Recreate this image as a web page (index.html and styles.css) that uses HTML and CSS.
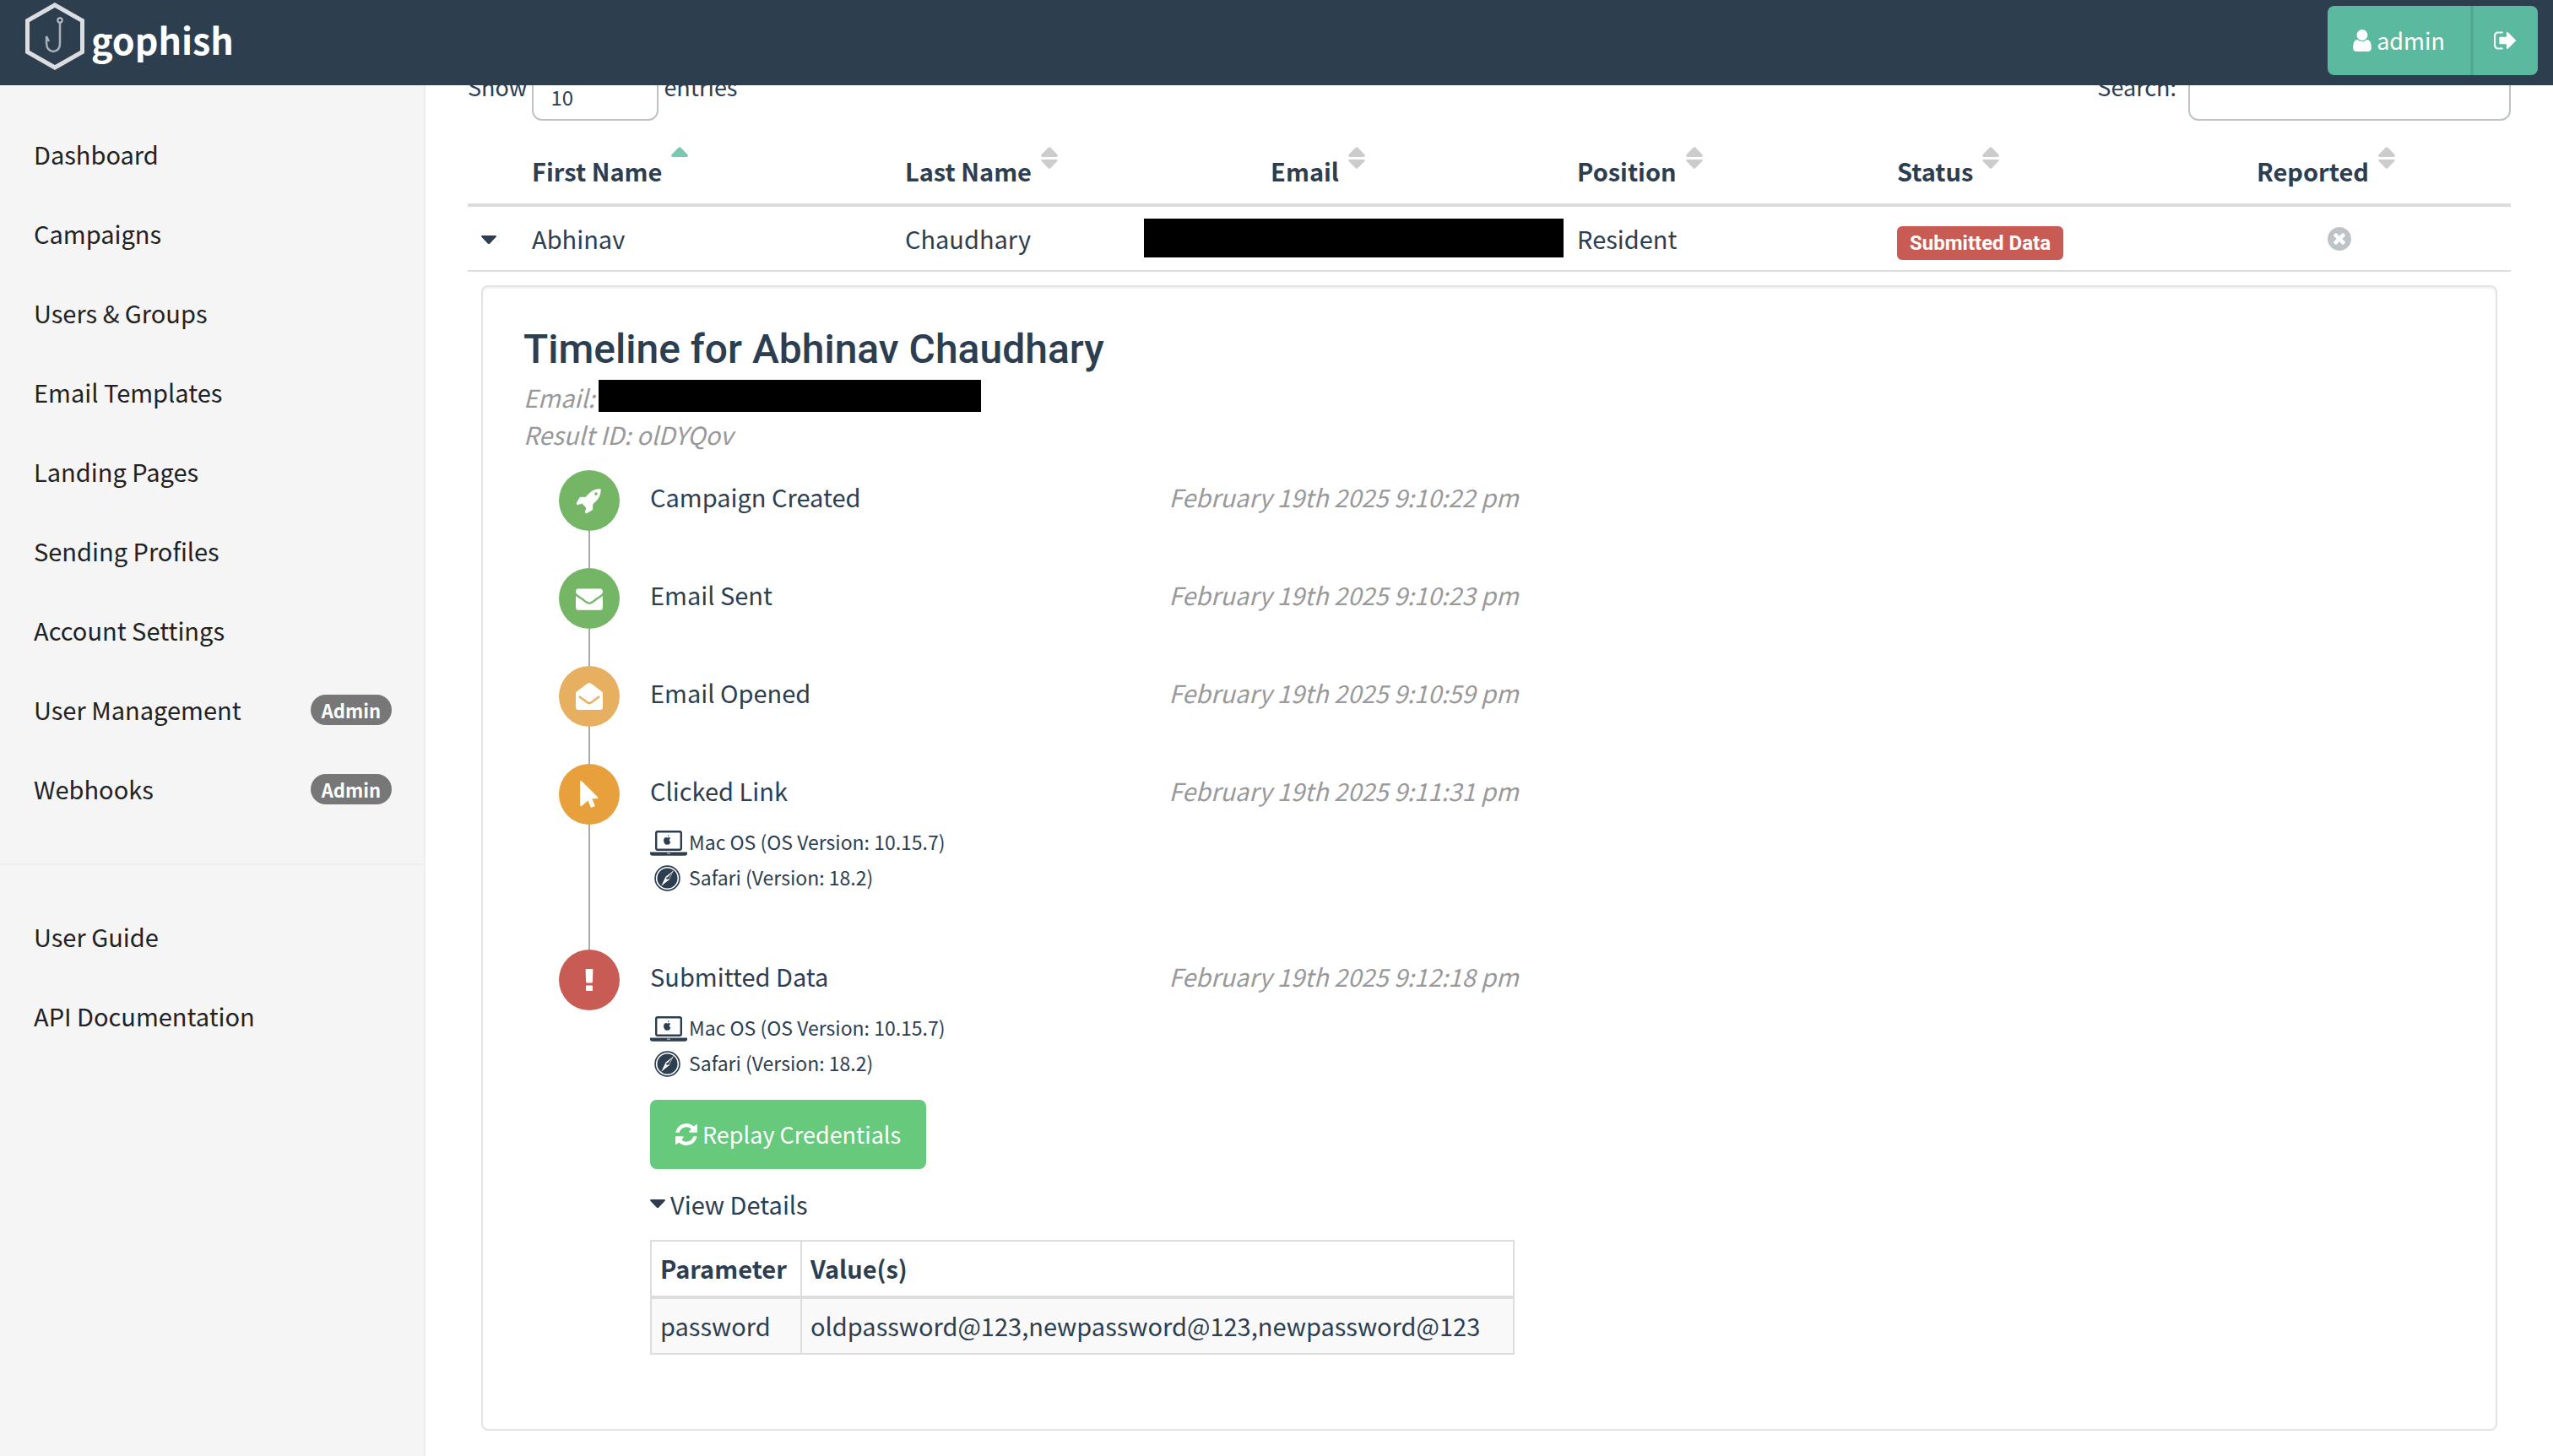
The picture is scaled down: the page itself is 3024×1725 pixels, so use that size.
FILE: index.html
```html
<!DOCTYPE html>
<html lang="en">
<head>
<meta charset="utf-8">
<meta name="viewport" content="width=device-width, initial-scale=1">
<title>Results - Gophish</title>
<link rel="stylesheet" href="styles.css">
</head>
<body>
<svg class="sprite" aria-hidden="true">
  <symbol id="i-user" viewBox="256 128 1280 1536"><path d="M1536 1399q0 109-62.500 187t-150.500 78h-854q-88 0-150.500-78t-62.500-187q0-85 8.500-160.500t31.500-152 58.500-131 94-89 134.500-34.500q131 128 313 128t313-128q76 0 134.500 34.500t94 89 58.500 131 31.500 152 8.500 160.500zm-256-887q0 159-112.500 271.500t-271.500 112.500-271.500-112.500-112.500-271.500 112.500-271.500 271.500-112.500 271.500 112.500 112.500 271.500z"/></symbol>
  <symbol id="i-signout" viewBox="64 256 1568 1280"><path d="M704 1440q0 4 1 20t.5 26.500-3 23.500-10 19.500-20.500 6.500h-320q-119 0-203.500-84.500t-84.500-203.500v-704q0-119 84.500-203.500t203.500-84.500h320q13 0 22.500 9.500t9.500 22.500q0 4 1 20t.5 26.500-3 23.500-10 19.500-20.500 6.500h-320q-66 0-113 47t-47 113v704q0 66 47 113t113 47h312l11.500 1 11.500 3 8 5.500 7 9 2 13.500zm928-544q0 26-19 45l-544 544q-19 19-45 19t-45-19-19-45v-288h-448q-26 0-45-19t-19-45v-384q0-26 19-45t45-19h448v-288q0-26 19-45t45-19 45 19l544 544q19 19 19 45z"/></symbol>
  <symbol id="i-refresh" viewBox="128 128 1536 1536"><path d="M1639 1056q0 5-1 7-64 268-268 434.500t-478 166.500q-146 0-282.500-55t-243.500-157l-129 129q-19 19-45 19t-45-19-19-45v-448q0-26 19-45t45-19h448q26 0 45 19t19 45-19 45l-137 137q71 66 161 102t187 36q134 0 250-65t186-179q11-17 53-117 8-23 30-23h192q13 0 22.500 9.500t9.500 22.500zm25-800v448q0 26-19 45t-45 19h-448q-26 0-45-19t-19-45 19-45l138-138q-148-137-349-137-134 0-250 65t-186 179q-11 17-53 117-8 23-30 23h-199q-13 0-22.500-9.500t-9.500-22.500v-7q65-268 270-434.500t480-166.500q146 0 284 55.500t245 156.500l130-129q19-19 45-19t45 19 19 45z"/></symbol>
  <symbol id="i-times" viewBox="128 128 1536 1536"><path d="M1277 1122q0-26-19-45l-181-181 181-181q19-19 19-45 0-27-19-46l-90-90q-19-19-46-19-26 0-45 19l-181 181-181-181q-19-19-45-19-27 0-46 19l-90 90q-19 19-19 46 0 26 19 45l181 181-181 181q-19 19-19 45 0 27 19 46l90 90q19 19 46 19 26 0 45-19l181-181 181 181q19 19 45 19 27 0 46-19l90-90q19-19 19-46zm387-226q0 209-103 385.500t-279.500 279.500-385.500 103-385.500-103-279.500-279.500-103-385.500 103-385.500 279.500-279.500 385.500-103 385.500 103 279.500 279.500 103 385.500z"/></symbol>
  <symbol id="i-rocket" viewBox="0 0 1792 1792"><path d="M1440 448q0-40-28-68t-68-28-68 28-28 68 28 68 68 28 68-28 28-68zm224-288q0 249-75.500 430.500t-253.500 360.500q-81 80-195 176l-20 379q-2 16-16 26l-384 224q-7 4-16 4-12 0-23-9l-64-64q-13-14-8-32l85-276-281-281-276 85q-3 1-9 1-14 0-23-9l-64-64q-17-19-5-39l224-384q10-14 26-16l379-20q96-114 176-195 188-187 358-258t431-71q14 0 24 9.500t10 22.500z"/></symbol>
  <symbol id="i-envelope" viewBox="0 0 1792 1792"><path d="M1792 710v794q0 66-47 113t-113 47h-1472q-66 0-113-47t-47-113v-794q44 49 101 87 362 246 497 345 57 42 92.500 65.500t94.500 48 110 24.500h2q51 0 110-24.500t94.500-48 92.500-65.500q170-123 498-345 57-39 100-87zm0-294q0 79-49 151t-122 123q-376 261-468 325-10 7-42.500 31t-54 38.500-52 32.500-57.500 27-50 9h-2q-23 0-50-9t-57.500-27-52-32.500-54-38.500-42.500-31q-91-64-262-182.500t-205-142.500q-62-42-117-115.500t-55-136.500q0-78 41.500-130t118.500-52h1472q65 0 112.500 47t47.500 113z"/></symbol>
  <symbol id="i-open" viewBox="0 0 32 32"><path fill-rule="evenodd" d="M0 12.500q0-1 .8-1.700Q4 8 12.500 1.800Q14.500 0 16 0t3.500 1.800Q28 8 31.200 10.800q.8.700.8 1.700V29q0 3-3 3H3q-3 0-3-3zM3.800 17.500l8.200 6q2.500 1.900 4 1.900t4-1.900l8.200-6q.7-.6.200-1.300l-.5-.7q-.5-.6-1.200-.1l-8.100 6q-1.800 1.300-2.600 1.300t-2.600-1.300l-8.100-6q-.7-.5-1.200.1l-.5.700q-.5.700.2 1.300z"/></symbol>
  <symbol id="i-pointer" viewBox="0 0 22 32"><path d="M1.900.3L21 19.200q1 1.900-1 2h-5.700l3.100 7.600q.3 1.100-.7 1.600l-2.600 1.200q-1.100.3-1.600-.7l-3-7.300-7.300 6.100q-2 .9-2.100-1V1.200Q.3-.4 1.900.3z"/></symbol>
  <symbol id="i-bang" viewBox="0 0 10 26"><path d="M1.600 0h6.800q1 0 1 1l-.5 14.500q-.1 1-1.100 1H2.200q-1 0-1.100-1L.6 1q0-1 1-1zM2 19.500h6q1 0 1 1V25q0 1-1 1H2q-1 0-1-1v-4.500q0-1 1-1z"/></symbol>
  <symbol id="i-laptop" viewBox="0 0 44 30"><path fill-rule="evenodd" d="M9 0h26q3 0 3 3v18q0 3-3 3H9q-3 0-3-3V3q0-3 3-3zm0 2.500q-.6 0-.6.600v17.800q0 .6.600.6h26q.6 0 .6-.6V3.100q0-.6-.6-.6zM0 25.500h44v1.800q0 2.400-3 2.400H3q-3 0-3-2.400zm20 1.200v.8h4v-.8z"/><path d="M21 7.500q-.2-1.900 1.500-2.700 0 2-1.500 2.700zM18.700 8.100q1 .1 1.700.5.400 0 1.200-.4 1.600-.4 2.500.8-1.800 1.500-1.100 3.200.4 1 1.300 1.400-1 3.100-2.600 3.100-.8-.4-1.400-.3-.7.300-1.300.4-1.100 0-2-1.800-1.200-2.200-.9-4.200.6-2.700 2.600-2.700z"/></symbol>
  <symbol id="i-safari" viewBox="0 0 32 32"><circle cx="16" cy="16" r="14.900" fill="none" stroke="currentColor" stroke-width="1.700"/><circle cx="16" cy="16" r="12.400"/><path fill="#fff" d="M23.600 6.500l-5.500 11.300-9.700 7.700 5.500-11.300z"/><path d="M16 15.200l6.200-7-4.500 9.200z"/><circle cx="16" cy="16" r="1.300"/></symbol>
  <symbol id="i-sort" viewBox="0 0 20 26"><path d="M8.700.8q1.300-1.300 2.600 0l8.200 8.500q.8 2.300-1 2.700h-17q-1.800-.4-1-2.700z"/><path class="sort-down" d="M8.700 25.200q1.300 1.300 2.600 0l8.200-8.500q.8-1.500-1-1.700h-17q-1.800.2-1 1.700z"/></symbol>
  <symbol id="i-caret" viewBox="0 0 18 10"><path d="M1.200 0h15.600q1.700.4.800 1.800l-7.300 7.600q-1.300 1.200-2.600 0L.4 1.800Q-.5.400 1.200 0z"/></symbol>
</svg>

<header class="navbar">
  <a class="brand" href="#">
    <svg class="brand-logo" viewBox="0 0 70 80" aria-hidden="true">
      <path d="M35 3L67.500 21.500v37L35 77 2.500 58.500v-37z" fill="none" stroke="#dcdde0" stroke-width="5"/>
      <path d="M41 24V48q0 9.500-8 10-7.500-.5-8-10v-8l3 6" fill="none" stroke="#a9b1b9" stroke-width="2.500"/>
      <circle cx="41" cy="21" r="2.700" fill="none" stroke="#b9bfc5" stroke-width="2"/>
    </svg>
    <span>gophish</span>
  </a>
  <div class="user-menu">
    <button class="user-btn" type="button"><svg class="ico-user"><use href="#i-user"/></svg>admin</button>
    <button class="logout-btn" type="button" aria-label="Log out"><svg class="ico-out"><use href="#i-signout"/></svg></button>
  </div>
</header>

<div class="layout">
  <nav class="sidebar">
    <a href="#">Dashboard</a>
    <a href="#">Campaigns</a>
    <a href="#">Users &amp; Groups</a>
    <a href="#">Email Templates</a>
    <a href="#">Landing Pages</a>
    <a href="#">Sending Profiles</a>
    <a href="#">Account Settings</a>
    <a href="#">User Management <span class="badge">Admin</span></a>
    <a href="#">Webhooks <span class="badge">Admin</span></a>
    <hr>
    <a href="#">User Guide</a>
    <a href="#">API Documentation</a>
  </nav>

  <main class="main">
    <div class="toolbar">
      <label>Show <select class="length"><option>10</option><option>25</option></select> entries</label>
      <label class="search-label">Search: <input class="search" type="search"></label>
    </div>

    <table class="results">
      <colgroup><col class="c-toggle"><col class="c-first"><col class="c-last"><col class="c-email"><col class="c-position"><col class="c-status"><col class="c-reported"></colgroup>
      <thead>
        <tr>
          <th></th>
          <th><div class="head"><span>First Name</span><svg class="sort asc"><use href="#i-sort"/></svg></div></th>
          <th><div class="head"><span>Last Name</span><svg class="sort"><use href="#i-sort"/></svg></div></th>
          <th class="mid"><div class="head"><span>Email</span><svg class="sort"><use href="#i-sort"/></svg></div></th>
          <th><div class="head"><span>Position</span><svg class="sort"><use href="#i-sort"/></svg></div></th>
          <th><div class="head"><span>Status</span><svg class="sort"><use href="#i-sort"/></svg></div></th>
          <th class="mid"><div class="head"><span>Reported</span><svg class="sort"><use href="#i-sort"/></svg></div></th>
        </tr>
      </thead>
      <tbody>
        <tr class="person">
          <td><svg class="caret"><use href="#i-caret"/></svg></td>
          <td>Abhinav</td>
          <td>Chaudhary</td>
          <td class="email-cell"><span class="redacted redacted-cell"></span></td>
          <td>Resident</td>
          <td><span class="label">Submitted Data</span></td>
          <td><svg class="ico-times"><use href="#i-times"/></svg></td>
        </tr>
        <tr class="detail">
          <td colspan="7">
            <section class="card">
              <h2>Timeline for Abhinav Chaudhary</h2>
              <p class="meta">Email:<span class="redacted redacted-meta"></span></p>
              <p class="meta">Result ID: olDYQov</p>
              <ol class="timeline">
                <li>
                  <div class="rail"><span class="dot green"><svg class="ico-32"><use href="#i-rocket"/></svg></span></div>
                  <div class="event"><div class="event-title"><span>Campaign Created</span><time>February 19th 2025 9:10:22 pm</time></div></div>
                </li>
                <li>
                  <div class="rail"><span class="dot green"><svg class="ico-32"><use href="#i-envelope"/></svg></span></div>
                  <div class="event"><div class="event-title"><span>Email Sent</span><time>February 19th 2025 9:10:23 pm</time></div></div>
                </li>
                <li>
                  <div class="rail"><span class="dot sand"><svg class="ico-32"><use href="#i-open"/></svg></span></div>
                  <div class="event"><div class="event-title"><span>Email Opened</span><time>February 19th 2025 9:10:59 pm</time></div></div>
                </li>
                <li>
                  <div class="rail"><span class="dot orange"><svg class="ico-32"><use href="#i-pointer"/></svg></span></div>
                  <div class="event">
                    <div class="event-title"><span>Clicked Link</span><time>February 19th 2025 9:11:31 pm</time></div>
                    <ul class="device">
                      <li><svg class="ico-laptop"><use href="#i-laptop"/></svg>Mac OS (OS Version: 10.15.7)</li>
                      <li><svg class="ico-safari"><use href="#i-safari"/></svg>Safari (Version: 18.2)</li>
                    </ul>
                  </div>
                </li>
                <li>
                  <div class="rail"><span class="dot red"><svg class="ico-bang"><use href="#i-bang"/></svg></span></div>
                  <div class="event">
                    <div class="event-title"><span>Submitted Data</span><time>February 19th 2025 9:12:18 pm</time></div>
                    <ul class="device">
                      <li><svg class="ico-laptop"><use href="#i-laptop"/></svg>Mac OS (OS Version: 10.15.7)</li>
                      <li><svg class="ico-safari"><use href="#i-safari"/></svg>Safari (Version: 18.2)</li>
                    </ul>
                    <button class="replay" type="button"><svg class="ico-refresh"><use href="#i-refresh"/></svg>Replay Credentials</button>
                    <details open>
                      <summary><svg class="caret"><use href="#i-caret"/></svg>View Details</summary>
                      <table class="params">
                        <thead><tr><th>Parameter</th><th>Value(s)</th></tr></thead>
                        <tbody><tr><td>password</td><td>oldpassword@123,newpassword@123,newpassword@123</td></tr></tbody>
                      </table>
                    </details>
                  </div>
                </li>
              </ol>
            </section>
          </td>
        </tr>
      </tbody>
    </table>
  </main>
</div>
</body>
</html>
```
FILE: styles.css
```css
* { box-sizing: border-box; }

body {
  margin: 0;
  background: #fff;
  color: #2c3e50;
  font-family: "Noto Sans CJK SC", "Noto Sans", sans-serif;
  font-size: 29px;
  line-height: 46px;
}

a { color: inherit; text-decoration: none; }
button, input, select { font: inherit; color: inherit; }
svg { display: block; flex: none; fill: currentColor; }
.sprite { position: absolute; width: 0; height: 0; }

/* Top bar */
.navbar {
  position: fixed;
  z-index: 10;
  top: 0;
  left: 0;
  right: 0;
  height: 101px;
  display: flex;
  justify-content: space-between;
  align-items: flex-start;
  padding: 3px 18px 0 30px;
  background: #2d3e4f;
  color: #fff;
}
.brand {
  display: flex;
  gap: 8px;
  font-size: 43px;
  font-weight: 700;
  line-height: 86px;
}
.brand-logo { width: 70px; height: 80px; }
.user-menu { display: flex; padding-top: 4px; }
.user-menu button {
  display: flex;
  align-items: center;
  height: 82px;
  border: 0;
  background: #5ab99f;
  color: #fff;
  font-size: 27px;
}
.user-menu .user-btn {
  gap: 6px;
  padding: 0 30px;
  border-right: 4px solid #52a891;
  border-radius: 8px 0 0 8px;
}
.user-menu .logout-btn { padding: 0 26px 0 24px; border-radius: 0 8px 8px 0; }
.ico-user { width: 22px; height: 26px; }
.ico-out { width: 26px; height: 22px; }

/* Page columns */
.layout {
  display: grid;
  grid-template-columns: 1fr 5fr;
  min-height: 100vh;
}
.sidebar {
  padding-top: 135px;
  background: #f5f5f5;
  border-right: 2px solid #eee;
  color: #222;
}
.sidebar a {
  display: flex;
  align-items: center;
  justify-content: space-between;
  height: 94px;
  padding: 0 38px 0 40px;
}
.sidebar hr {
  height: 2px;
  margin: 42px 0 37px;
  border: 0;
  background: #eee;
}
.badge {
  margin-top: 2px;
  padding: 0 13px;
  border-radius: 20px;
  background: #777;
  color: #fff;
  font-size: 22px;
  font-weight: 700;
  line-height: 36px;
}
.main { min-width: 0; padding: 79px 50px 0; }

/* Length and search controls */
.toolbar {
  display: flex;
  justify-content: space-between;
  height: 64px;
  font-size: 27px;
  line-height: 48px;
}
.toolbar label { display: flex; gap: 6px; }
.toolbar .search-label { gap: 14px; }
.length, .search {
  align-self: flex-end;
  height: 60px;
  border: 2px solid #bdc3c7;
  border-radius: 12px;
  background: #fff;
  font-size: 24px;
}
.length { width: 150px; padding: 4px 20px 0; appearance: none; }
.search { width: 382px; padding: 0 20px; }

/* Results table */
.results {
  width: 100%;
  margin-top: 16px;
  border-collapse: separate;
  border-spacing: 0;
  table-layout: fixed;
}
.c-toggle { width: 2.48%; }
.c-first { width: 18.26%; }
.c-last { width: 10.17%; }
.c-email { width: 22.73%; }
.c-position { width: 15.66%; }
.c-status { width: 13.92%; }
.c-reported { width: 16.78%; }
.results > thead th {
  padding: 15px 48px 16px 16px;
  border-bottom: 4px solid #ddd;
  font-weight: 700;
  white-space: nowrap;
}
.person td { height: 75px; padding: 14px 16px 12px; vertical-align: top; }
.detail > td { padding: 16px; border-top: 2px solid #ddd; }
.head { display: flex; gap: 11px; }
.head span { padding-top: 5px; }
.mid .head { justify-content: center; }
.sort { width: 20px; height: 26px; color: #ccc; }
.sort.asc { --sort-down: transparent; color: #7bc8b2; }
.sort-down { fill: var(--sort-down, currentColor); }
.caret { width: 18px; height: 10px; }
.person .caret { margin-top: 20px; }
.ico-times { width: 28px; height: 28px; margin: 10px auto 0; color: #bdc3c7; }
.person .email-cell { padding-left: 0; padding-right: 0; }
.redacted { display: block; background: #000; }
.redacted-cell { width: 497px; height: 46px; margin-left: auto; }
.label {
  display: inline-block;
  margin-top: 9px;
  padding: 0 15px;
  border-radius: 6px;
  background: #c85c54;
  color: #fff;
  font: 700 24px/40px Roboto, sans-serif;
  vertical-align: top;
}

/* Timeline card */
.card {
  padding: 48px 50px 88px 48px;
  border: 2px solid #e3e3e3;
  border-radius: 8px;
  box-shadow: inset 0 2px 2px rgba(0, 0, 0, 0.05);
}
.card h2 {
  margin: 0 0 8px;
  font: 500 48px/52px Roboto, sans-serif;
}
.meta {
  display: flex;
  align-items: flex-start;
  gap: 4px;
  margin: 0;
  color: #999;
  font-style: italic;
  line-height: 44px;
}
.redacted-meta { width: 453px; height: 38px; margin-top: 2px; }
.timeline {
  max-width: 1174px;
  margin: 21px 0 0;
  padding: 0 0 0 42px;
  list-style: none;
}
.timeline > li { display: grid; grid-template-columns: 72px 1fr; column-gap: 36px; }
.rail { display: flex; flex-direction: column; align-items: center; }
.rail::after { content: ""; flex: 1; width: 2px; background: #aaa; }
.timeline > li:last-child .rail::after { display: none; }
.dot {
  display: flex;
  align-items: center;
  justify-content: center;
  width: 72px;
  height: 72px;
  border-radius: 50%;
  color: #fff;
}
.green { background: #75b666; }
.sand { background: #e6b060; }
.orange { background: #e8a03c; }
.red { background: #c85c54; }
.ico-32 { width: 32px; height: 32px; }
.ico-bang { width: 10px; height: 26px; }
.event { min-width: 0; padding: 8px 0 62px; }
.timeline > li:last-child .event { padding-bottom: 0; }
.event-title { display: grid; grid-template-columns: minmax(0, 3fr) minmax(0, 2fr); }
.event-title time { color: #999; font-style: italic; white-space: nowrap; }
.device {
  margin: 17px 0 3px;
  padding: 0;
  list-style: none;
  font-size: 23px;
  line-height: 42px;
}
.device li { display: flex; align-items: center; }
.ico-laptop { width: 44px; height: 30px; margin: 4px 2px 0 0; }
.ico-safari { width: 31px; height: 31px; margin: 2px 10px 0 5px; }
.replay {
  display: flex;
  align-items: center;
  gap: 6px;
  height: 82px;
  margin-top: 23px;
  padding: 0 30px;
  border: 0;
  border-radius: 8px;
  background: #66c97b;
  color: #fff;
  font-size: 27px;
}
.ico-refresh { width: 26px; height: 26px; }
details { margin-top: 18px; }
summary { display: flex; align-items: center; gap: 6px; list-style: none; }
.params {
  width: 100%;
  margin-top: 20px;
  border-collapse: collapse;
}
.params th, .params td {
  padding: 8px 10px 10px;
  border: 2px solid #ddd;
  text-align: left;
}
.params th { border-bottom-width: 4px; }
.params th:first-child { width: 178px; }
.params tbody { background: #f9f9f9; }
```
